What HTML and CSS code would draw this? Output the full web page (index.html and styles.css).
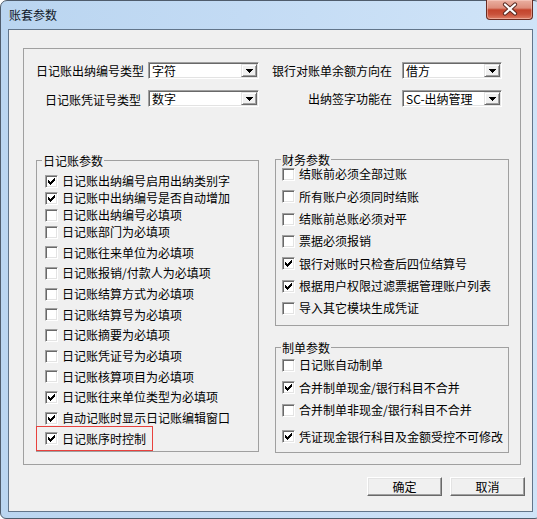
FILE: index.html
```html
<!DOCTYPE html>
<html lang="zh-CN">
<head>
<meta charset="utf-8">
<title>账套参数</title>
<link rel="stylesheet" href="styles.css">
</head>
<body>
<div class="window">
  <div class="titlebar">
    <span class="title">账套参数</span>
    <button class="close" aria-label="关闭">
      <svg width="47" height="20" viewBox="0 0 47 20">
        <path d="M19 5.5 L29 14.5 M29 5.5 L19 14.5" stroke="#5a2a22" stroke-width="4.2" stroke-linecap="round" fill="none"/>
        <path d="M19 5.5 L29 14.5 M29 5.5 L19 14.5" stroke="#ffffff" stroke-width="2.2" stroke-linecap="round" fill="none"/>
      </svg>
    </button>
  </div>
  <div class="client">
    <div class="frame">
      <div class="top-grid">
        <div class="lbl lbl-a">日记账出纳编号类型</div>
        <div class="combo"><span class="val">字符</span><span class="arrow"><svg width="7" height="4" viewBox="0 0 7 4" shape-rendering="crispEdges"><path d="M0 0h7v1h-1v1h-1v1h-1v1h-1v-1h-1v-1h-1v-1h-1z"/></svg></span></div>
        <div class="lbl lbl-c">银行对账单余额方向在</div>
        <div class="combo"><span class="val">借方</span><span class="arrow"><svg width="7" height="4" viewBox="0 0 7 4" shape-rendering="crispEdges"><path d="M0 0h7v1h-1v1h-1v1h-1v1h-1v-1h-1v-1h-1v-1h-1z"/></svg></span></div>
        <div class="lbl lbl-b">日记账凭证号类型</div>
        <div class="combo"><span class="val">数字</span><span class="arrow"><svg width="7" height="4" viewBox="0 0 7 4" shape-rendering="crispEdges"><path d="M0 0h7v1h-1v1h-1v1h-1v1h-1v-1h-1v-1h-1v-1h-1z"/></svg></span></div>
        <div class="lbl lbl-c">出纳签字功能在</div>
        <div class="combo"><span class="val">SC-出纳管理</span><span class="arrow"><svg width="7" height="4" viewBox="0 0 7 4" shape-rendering="crispEdges"><path d="M0 0h7v1h-1v1h-1v1h-1v1h-1v-1h-1v-1h-1v-1h-1z"/></svg></span></div>
      </div>

      <div class="groups">
        <div class="group g-left">
          <div class="group-title">日记账参数</div>
          <div class="row t"><span class="cb"><svg class="chk" width="7" height="7" viewBox="0 0 7 7" shape-rendering="crispEdges"><path d="M6 0h1v1h-1z M5 1h2v1h-2z M0 2h1v1h-1z M4 2h3v1h-3z M0 3h2v1h-2z M3 3h3v1h-3z M0 4h5v1h-5z M1 5h3v1h-3z M2 6h1v1h-1z"/></svg></span><span class="txt">日记账出纳编号启用出纳类别字</span></div>
          <div class="row t"><span class="cb"><svg class="chk" width="7" height="7" viewBox="0 0 7 7" shape-rendering="crispEdges"><path d="M6 0h1v1h-1z M5 1h2v1h-2z M0 2h1v1h-1z M4 2h3v1h-3z M0 3h2v1h-2z M3 3h3v1h-3z M0 4h5v1h-5z M1 5h3v1h-3z M2 6h1v1h-1z"/></svg></span><span class="txt">日记账中出纳编号是否自动增加</span></div>
          <div class="row t"><span class="cb"></span><span class="txt">日记账出纳编号必填项</span></div>
          <div class="row t"><span class="cb"></span><span class="txt">日记账部门为必填项</span></div>
          <div class="row sp"><span class="cb"></span><span class="txt">日记账往来单位为必填项</span></div>
          <div class="row"><span class="cb"></span><span class="txt">日记账报销/付款人为必填项</span></div>
          <div class="row"><span class="cb"></span><span class="txt">日记账结算方式为必填项</span></div>
          <div class="row"><span class="cb"></span><span class="txt">日记账结算号为必填项</span></div>
          <div class="row"><span class="cb"></span><span class="txt">日记账摘要为必填项</span></div>
          <div class="row"><span class="cb"></span><span class="txt">日记账凭证号为必填项</span></div>
          <div class="row"><span class="cb"></span><span class="txt">日记账核算项目为必填项</span></div>
          <div class="row"><span class="cb"><svg class="chk" width="7" height="7" viewBox="0 0 7 7" shape-rendering="crispEdges"><path d="M6 0h1v1h-1z M5 1h2v1h-2z M0 2h1v1h-1z M4 2h3v1h-3z M0 3h2v1h-2z M3 3h3v1h-3z M0 4h5v1h-5z M1 5h3v1h-3z M2 6h1v1h-1z"/></svg></span><span class="txt">日记账往来单位类型为必填项</span></div>
          <div class="row"><span class="cb"><svg class="chk" width="7" height="7" viewBox="0 0 7 7" shape-rendering="crispEdges"><path d="M6 0h1v1h-1z M5 1h2v1h-2z M0 2h1v1h-1z M4 2h3v1h-3z M0 3h2v1h-2z M3 3h3v1h-3z M0 4h5v1h-5z M1 5h3v1h-3z M2 6h1v1h-1z"/></svg></span><span class="txt">自动记账时显示日记账编辑窗口</span></div>
          <div class="row hl-row"><span class="hl"></span><span class="cb"><svg class="chk" width="7" height="7" viewBox="0 0 7 7" shape-rendering="crispEdges"><path d="M6 0h1v1h-1z M5 1h2v1h-2z M0 2h1v1h-1z M4 2h3v1h-3z M0 3h2v1h-2z M3 3h3v1h-3z M0 4h5v1h-5z M1 5h3v1h-3z M2 6h1v1h-1z"/></svg></span><span class="txt">日记账序时控制</span></div>
        </div>

        <div class="col-right">
          <div class="group g-fin">
            <div class="group-title">财务参数</div>
            <div class="row"><span class="cb"></span><span class="txt">结账前必须全部过账</span></div>
            <div class="row"><span class="cb"></span><span class="txt">所有账户必须同时结账</span></div>
            <div class="row"><span class="cb"></span><span class="txt">结账前总账必须对平</span></div>
            <div class="row"><span class="cb"></span><span class="txt">票据必须报销</span></div>
            <div class="row"><span class="cb"><svg class="chk" width="7" height="7" viewBox="0 0 7 7" shape-rendering="crispEdges"><path d="M6 0h1v1h-1z M5 1h2v1h-2z M0 2h1v1h-1z M4 2h3v1h-3z M0 3h2v1h-2z M3 3h3v1h-3z M0 4h5v1h-5z M1 5h3v1h-3z M2 6h1v1h-1z"/></svg></span><span class="txt">银行对账时只检查后四位结算号</span></div>
            <div class="row"><span class="cb"><svg class="chk" width="7" height="7" viewBox="0 0 7 7" shape-rendering="crispEdges"><path d="M6 0h1v1h-1z M5 1h2v1h-2z M0 2h1v1h-1z M4 2h3v1h-3z M0 3h2v1h-2z M3 3h3v1h-3z M0 4h5v1h-5z M1 5h3v1h-3z M2 6h1v1h-1z"/></svg></span><span class="txt">根据用户权限过滤票据管理账户列表</span></div>
            <div class="row"><span class="cb"></span><span class="txt">导入其它模块生成凭证</span></div>
          </div>
          <div class="group g-vou">
            <div class="group-title">制单参数</div>
            <div class="row"><span class="cb"></span><span class="txt">日记账自动制单</span></div>
            <div class="row"><span class="cb"><svg class="chk" width="7" height="7" viewBox="0 0 7 7" shape-rendering="crispEdges"><path d="M6 0h1v1h-1z M5 1h2v1h-2z M0 2h1v1h-1z M4 2h3v1h-3z M0 3h2v1h-2z M3 3h3v1h-3z M0 4h5v1h-5z M1 5h3v1h-3z M2 6h1v1h-1z"/></svg></span><span class="txt">合并制单现金/银行科目不合并</span></div>
            <div class="row"><span class="cb"></span><span class="txt">合并制单非现金/银行科目不合并</span></div>
            <div class="row last"><span class="cb"><svg class="chk" width="7" height="7" viewBox="0 0 7 7" shape-rendering="crispEdges"><path d="M6 0h1v1h-1z M5 1h2v1h-2z M0 2h1v1h-1z M4 2h3v1h-3z M0 3h2v1h-2z M3 3h3v1h-3z M0 4h5v1h-5z M1 5h3v1h-3z M2 6h1v1h-1z"/></svg></span><span class="txt">凭证现金银行科目及金额受控不可修改</span></div>
          </div>
        </div>
      </div>
    </div>
    <div class="buttons">
      <button class="btn">确定</button>
      <button class="btn">取消</button>
    </div>
  </div>
</div>
</body>
</html>
```

FILE: styles.css
```css
html, body {
  margin: 0;
  padding: 0;
}
body {
  width: 537px;
  height: 519px;
  overflow: hidden;
  background: #ffffff;
  font-family: "Noto Sans CJK SC", "Liberation Sans", sans-serif;
  font-size: 12px;
  color: #000;
}
.window {
  box-sizing: border-box;
  width: 541px;
  height: 519px;
  border: 1px solid #4f5c6c;
  border-radius: 7px 7px 6px 6px;
  background: linear-gradient(90deg, #bad5f0 0%, #c3dbf4 45%, #d0e4f8 100%);
  padding: 0 7px 6px 7px;
  display: flex;
  flex-direction: column;
}
.titlebar {
  height: 28px;
  display: flex;
  align-items: flex-start;
  padding-left: 1px;
  flex: none;
}
.title {
  line-height: 28px;
  font-size: 12px;
  color: #101828;
}
.close {
  margin-left: auto;
  margin-top: -1px;
  width: 47px;
  height: 20px;
  padding: 0;
  box-sizing: border-box;
  border: 1px solid #6a2c22;
  border-top: none;
  border-radius: 0 0 4px 4px;
  background: linear-gradient(#eab0a1 0%, #dd8d7b 42%, #c4442c 52%, #c9513a 75%, #de7e66 100%);
  box-shadow: inset 0 0 0 1px rgba(255, 220, 210, 0.45);
  display: block;
}
.close svg {
  display: block;
  margin: -1px 0 0 -1px;
}
.client {
  flex: 1;
  border: 1px solid #62758a;
  background: #f0f0f0;
  display: flex;
  flex-direction: column;
}
.frame {
  box-sizing: border-box;
  margin: 18px 0 0 14px;
  width: 498px;
  height: 417px;
  border: 1px solid #a0a0a0;
  flex: none;
}
.top-grid {
  display: grid;
  grid-template-columns: 124px 111px 143px 100px;
  grid-template-rows: 17px 17px;
  row-gap: 11px;
  margin-top: 13px;
}
.lbl {
  line-height: 17px;
  text-align: right;
  white-space: nowrap;
}
.lbl-a { padding-right: 4px; }
.lbl-b { padding-right: 7px; line-height: 19px; }
.lbl-c { padding-right: 10px; }
.combo {
  box-sizing: border-box;
  display: flex;
  border: 1px solid;
  border-color: #a0a0a0 #ffffff #ffffff #a0a0a0;
  box-shadow: inset 1px 1px 0 #696969, inset -1px -1px 0 #e3e3e3;
  background: #ffffff;
  padding: 1px;
}
.val {
  flex: 1;
  display: flex;
  align-items: center;
  padding-left: 2px;
  white-space: nowrap;
  line-height: 13px;
}
.arrow {
  box-sizing: border-box;
  width: 16px;
  flex: none;
  border: 1px solid;
  border-color: #e3e3e3 #696969 #696969 #e3e3e3;
  box-shadow: inset 1px 1px 0 #ffffff, inset -1px -1px 0 #a0a0a0;
  background: #f0f0f0;
  display: flex;
  align-items: center;
  justify-content: center;
}
.arrow svg {
  display: block;
  fill: #000;
}
.groups {
  display: flex;
  margin: 53px 0 0 12px;
  gap: 16px;
  align-items: flex-start;
}
.group {
  position: relative;
  box-sizing: border-box;
  border: 1px solid #a0a0a0;
}
.group-title {
  position: absolute;
  top: -8px;
  left: 5px;
  padding: 0 1px;
  line-height: 15px;
  background: #f0f0f0;
  white-space: nowrap;
}
.row {
  display: flex;
  align-items: center;
  gap: 4px;
  white-space: nowrap;
  position: relative;
}
.cb {
  box-sizing: border-box;
  width: 13px;
  height: 13px;
  flex: none;
  border: 1px solid;
  border-color: #a0a0a0 #ffffff #ffffff #a0a0a0;
  box-shadow: inset 1px 1px 0 #696969, inset -1px -1px 0 #e3e3e3;
  background: #ffffff;
  position: relative;
}
.chk {
  position: absolute;
  left: 2px;
  top: 2px;
  fill: #000;
  display: block;
}
.txt {
  line-height: 16px;
}
.g-left {
  width: 223px;
  height: 292px;
  padding: 11.5px 0 0 8px;
}
.g-left .row {
  height: 20.67px;
}
.g-left .row.t {
  height: 17px;
}
.g-left .row.sp {
  margin-top: 2px;
}
.hl {
  position: absolute;
  left: -9px;
  top: -2px;
  width: 117px;
  height: 25px;
  box-sizing: border-box;
  border: 1px solid #e8413d;
  pointer-events: none;
}
.col-right {
  width: 234px;
  display: flex;
  flex-direction: column;
  gap: 21px;
  margin-top: -1px;
}
.g-fin {
  height: 167px;
  padding: 3.3px 0 0 6px;
}
.g-fin .row {
  height: 22.33px;
}
.g-vou {
  height: 106px;
  padding: 5.75px 0 0 6px;
}
.g-vou .row {
  height: 22.5px;
}
.g-vou .row.last {
  margin-top: 4px;
}
.buttons {
  display: flex;
  justify-content: flex-end;
  gap: 8px;
  margin-top: 12px;
  padding-right: 7px;
}
.btn {
  box-sizing: border-box;
  width: 75px;
  height: 19px;
  padding: 0;
  font-family: "Noto Sans CJK SC", "Liberation Sans", sans-serif;
  font-size: 12px;
  line-height: 15px;
  color: #000;
  background: #f0f0f0;
  border: 1px solid;
  border-color: #ffffff #696969 #696969 #ffffff;
  box-shadow: inset -1px -1px 0 #a0a0a0, inset 1px 1px 0 #e3e3e3;
}
```
